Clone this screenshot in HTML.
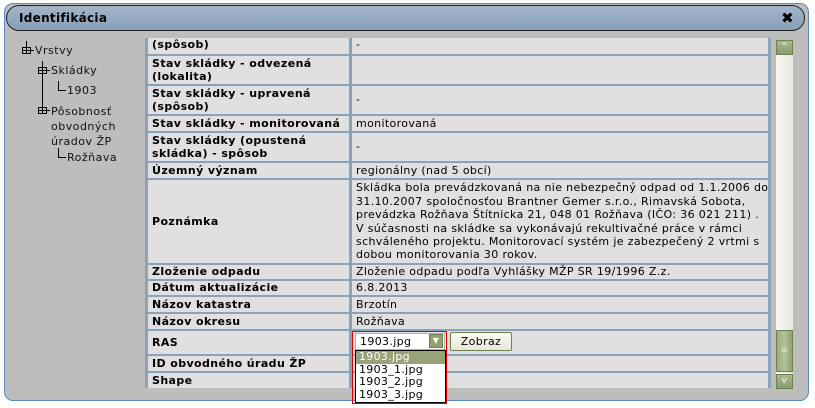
<!DOCTYPE html>
<html><head><meta charset="utf-8"><style>
*{margin:0;padding:0;box-sizing:border-box}
body{width:815px;height:408px;background:#fff;position:relative;overflow:hidden;font-family:"DejaVu Sans",Verdana,sans-serif;font-size:11px;color:#000;letter-spacing:0.35px}
.dlg{position:absolute;left:4px;top:3px;width:805px;height:398px;background:#bdbdbc;border:1px solid #5b8ac4;border-radius:9px}
.title{position:absolute;left:6px;top:5px;width:799px;height:26px;border:1px solid #222;border-radius:13px;background:linear-gradient(#a3b6c9,#87a0b8);letter-spacing:0.3px}
.title span{position:absolute;left:12px;top:5px;font-weight:bold;font-size:12px}
.close{position:absolute;right:10px;top:3px;font-size:15px;font-weight:bold}
.tree{position:absolute;font-size:11px;color:#111;letter-spacing:0.5px}
.tbl{position:absolute;left:145px;top:38px;width:626px;height:350px;background:#8aa3ba;overflow:hidden}
.r{position:absolute;left:3px;width:620px}
.l,.v{position:absolute;top:0;bottom:0;background:#e0e0e0;padding:0 4px;display:flex;align-items:center;line-height:13.4px;white-space:nowrap;overflow:hidden}
.l{left:0;width:201px;font-weight:bold;letter-spacing:0.4px}
.v{left:204px;width:416px}
.sb{position:absolute;left:776px;top:40px;width:17px;height:349px;background:linear-gradient(90deg,#f8f8f4,#e9e9e0)}
.btn{position:absolute;left:0;width:17px;height:15px;background:linear-gradient(#a9b98e,#8a9d6c);border:1px solid #6c8050;color:#fff;font-size:9px;text-align:center;line-height:13px}
</style></head><body>
<div class="dlg"></div>
<div class="title"><span>Identifikácia</span><div class="close">✖</div></div>
<svg style="position:absolute;left:20px;top:38px" width="80" height="130">
<g stroke="#000" fill="none" stroke-width="1">
<rect x="2.5" y="9.5" width="8" height="6"/><line x1="6.5" y1="3" x2="6.5" y2="15"/><line x1="2" y1="12.5" x2="14" y2="12.5"/>
<rect x="18.5" y="29.5" width="8" height="6"/><line x1="22.5" y1="23" x2="22.5" y2="75"/><line x1="18" y1="32.5" x2="30" y2="32.5"/>
<line x1="38.5" y1="43" x2="38.5" y2="52"/><line x1="38" y1="52.5" x2="46" y2="52.5"/>
<rect x="18.5" y="69.5" width="8" height="6"/><line x1="18" y1="72.5" x2="30" y2="72.5"/>
<line x1="38.5" y1="110" x2="38.5" y2="119"/><line x1="38" y1="119.5" x2="46" y2="119.5"/>
</g></svg>
<div class="tree" style="left:35px;top:44px">Vrstvy</div>
<div class="tree" style="left:51px;top:64px">Skládky</div>
<div class="tree" style="left:67px;top:84px">1903</div>
<div class="tree" style="left:51px;top:104px;line-height:15px">Pôsobnosť<br>obvodných<br>úradov ŽP</div>
<div class="tree" style="left:67px;top:151px">Rožňava</div>
<div class="tbl">
<div class="r" style="top:-2px;height:18px"><div class="l">(spôsob)</div><div class="v">-</div></div>
<div class="r" style="top:18px;height:28px"><div class="l">Stav skládky - odvezená<br>(lokalita)</div><div class="v"></div></div>
<div class="r" style="top:48px;height:28px"><div class="l">Stav skládky - upravená<br>(spôsob)</div><div class="v">-</div></div>
<div class="r" style="top:78px;height:15px"><div class="l">Stav skládky - monitorovaná</div><div class="v">monitorovaná</div></div>
<div class="r" style="top:95px;height:28px"><div class="l">Stav skládky (opustená<br>skládka) - spôsob</div><div class="v">-</div></div>
<div class="r" style="top:125px;height:15px"><div class="l">Územný význam</div><div class="v">regionálny (nad 5 obcí)</div></div>
<div class="r" style="top:142px;height:83px"><div class="l">Poznámka</div><div class="v">Skládka bola prevádzkovaná na nie nebezpečný odpad od 1.1.2006 do<br>31.10.2007 spoločnosťou Brantner Gemer s.r.o., Rimavská Sobota,<br>prevádzka Rožňava Štítnicka 21, 048 01 Rožňava (IČO: 36 021 211) .<br>V súčasnosti na skládke sa vykonávajú rekultivačné práce v rámci<br>schváleného projektu. Monitorovací systém je zabezpečený 2 vrtmi s<br>dobou monitorovania 30 rokov.</div></div>
<div class="r" style="top:227px;height:14px"><div class="l">Zloženie odpadu</div><div class="v">Zloženie odpadu podľa Vyhlášky MŽP SR 19/1996 Z.z.</div></div>
<div class="r" style="top:243px;height:14px"><div class="l">Dátum aktualizácie</div><div class="v">6.8.2013</div></div>
<div class="r" style="top:259px;height:15px"><div class="l">Názov katastra</div><div class="v">Brzotín</div></div>
<div class="r" style="top:276px;height:15px"><div class="l">Názov okresu</div><div class="v">Rožňava</div></div>
<div class="r" style="top:293px;height:23px"><div class="l">RAS</div><div class="v"></div></div>
<div class="r" style="top:318px;height:15px"><div class="l">ID obvodného úradu ŽP</div><div class="v"></div></div>
<div class="r" style="top:335px;height:15px"><div class="l">Shape</div><div class="v"></div></div>
</div>
<div class="sb">
<div class="btn" style="top:0">^</div>
<div style="position:absolute;left:0;top:290px;width:17px;height:42px;background:linear-gradient(90deg,#9aad80,#b3c29a,#8ea270);border:1px solid #6c8050;color:#e8eedd;text-align:center;line-height:40px;font-size:9px">≡</div>
<div class="btn" style="top:334px">v</div>
</div>
<div style="position:absolute;left:352px;top:331px;width:95px;height:73px;border:1px solid #e00000"></div>
<div style="position:absolute;left:355px;top:333px;width:90px;height:17px;background:#fff;border:1px solid #b0b0b0;padding-left:4px;line-height:15px">1903.jpg</div>
<div style="position:absolute;left:429px;top:334px;width:14px;height:14px;background:#8fa36f;border:1px solid #6c8050;color:#fff;font-size:8px;text-align:center;line-height:12px">▼</div>
<div style="position:absolute;left:450px;top:332px;width:62px;height:19px;background:linear-gradient(#fbfbf3,#e7e7d8);border:1px solid #6c8050;border-radius:2px;text-align:center;line-height:17px">Zobraz</div>
<div style="position:absolute;left:355px;top:350px;width:91px;height:53px;background:#fff;border:1px solid #000;line-height:12.5px;letter-spacing:0.3px">
<div style="background:#98a37a;color:#fff;padding-left:3px">1903.jpg</div>
<div style="padding-left:3px">1903_1.jpg</div>
<div style="padding-left:3px">1903_2.jpg</div>
<div style="padding-left:3px">1903_3.jpg</div>
</div>
</body></html>
